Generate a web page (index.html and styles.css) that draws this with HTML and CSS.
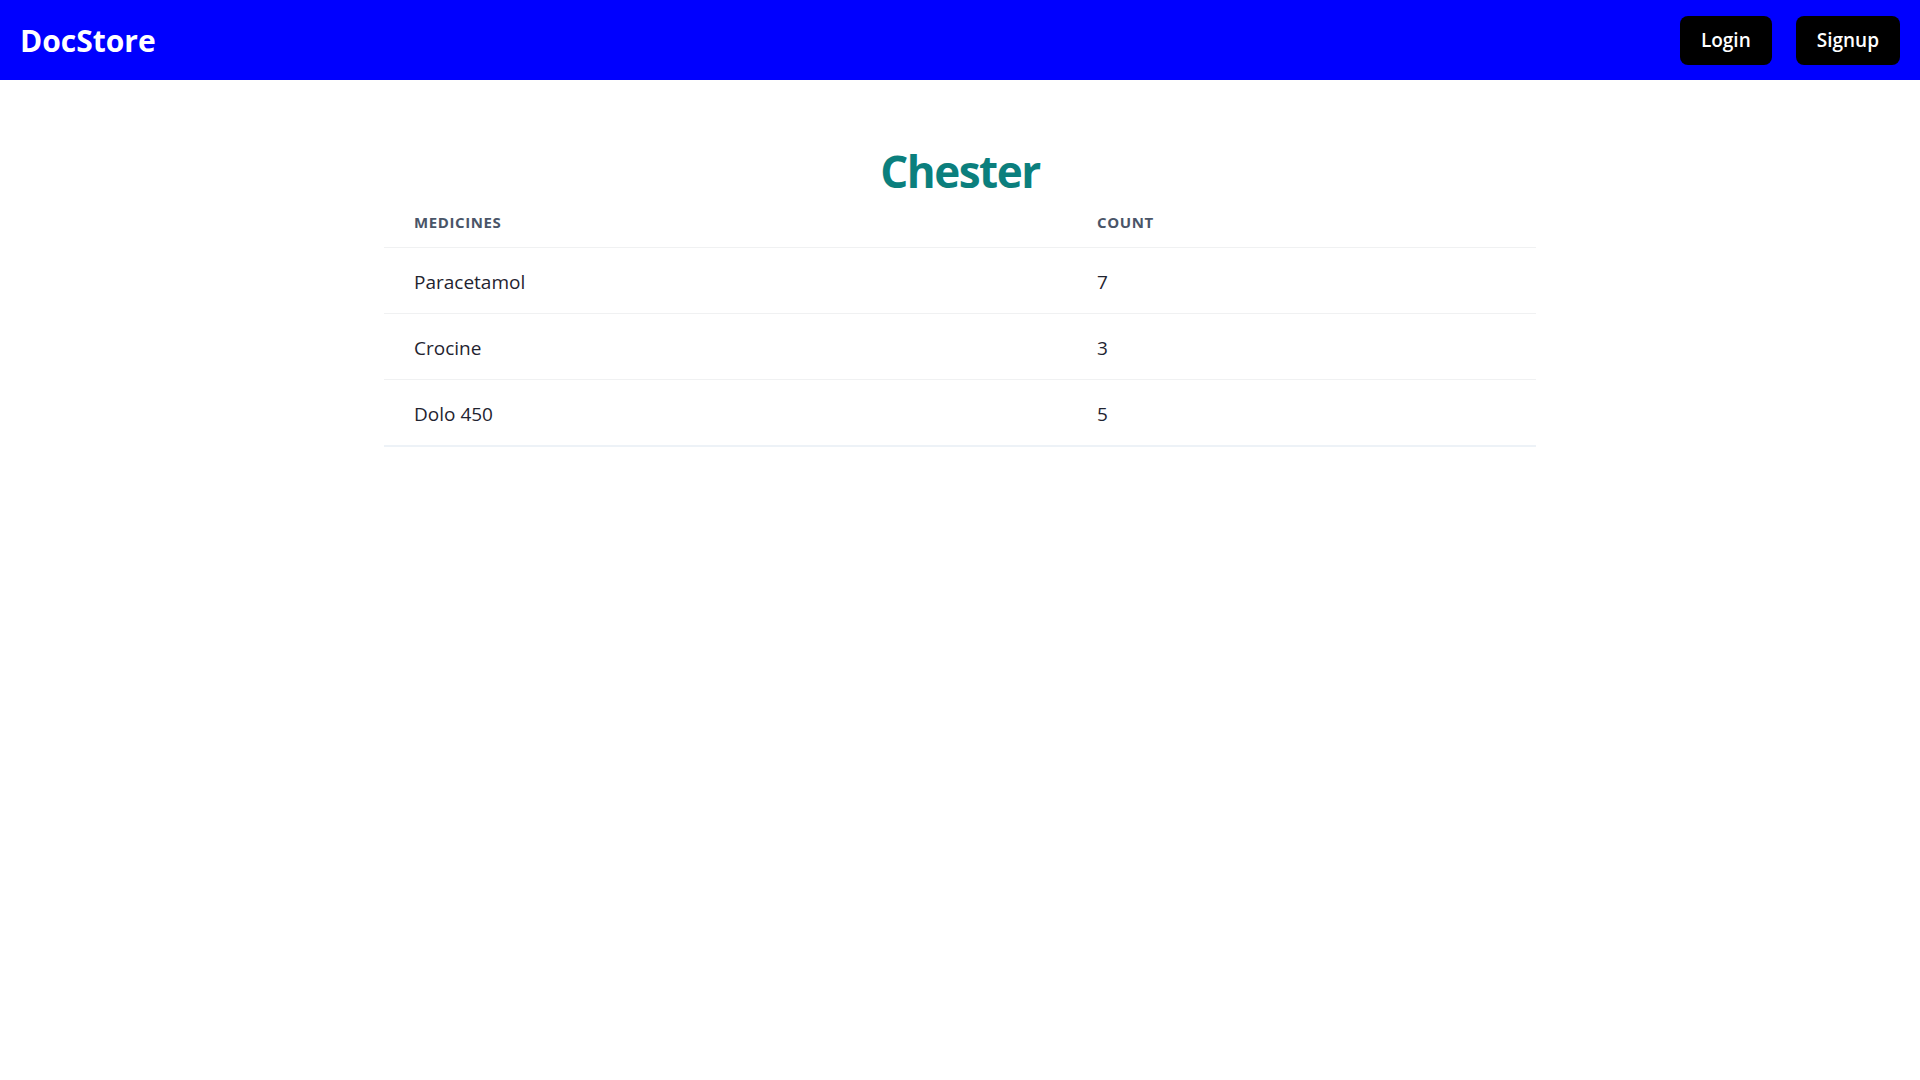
FILE: index.html
```html
<!DOCTYPE html>
<html lang="en">
<head>
<meta charset="utf-8">
<title>DocStore</title>
<link rel="stylesheet" href="styles.css">
</head>
<body>
<nav class="navbar">
  <a class="brand" href="#">DocStore</a>
  <div class="nav-actions">
    <button class="btn">Login</button>
    <button class="btn">Signup</button>
  </div>
</nav>
<main class="content">
  <h1 class="store-title">Chester</h1>
  <table class="stock-table">
    <thead>
      <tr>
        <th class="col-name">Medicines</th>
        <th class="col-count">Count</th>
      </tr>
    </thead>
    <tbody>
      <tr><td>Paracetamol</td><td>7</td></tr>
      <tr><td>Crocine</td><td>3</td></tr>
      <tr><td>Dolo 450</td><td>5</td></tr>
    </tbody>
  </table>
</main>
</body>
</html>
```
FILE: styles.css
```css
html, body {
  margin: 0;
  padding: 0;
  background: #ffffff;
  font-family: "Open Sans", "Noto Sans", sans-serif;
}

.navbar {
  height: 80px;
  box-sizing: border-box;
  background: #0000ff;
  display: flex;
  align-items: center;
  justify-content: space-between;
  padding: 0 20px;
}

.brand {
  color: #ffffff;
  font-size: 30px;
  font-weight: 700;
  text-decoration: none;
  letter-spacing: 0;
}

.nav-actions {
  display: flex;
  gap: 24px;
}

.btn {
  background: #000000;
  color: #ffffff;
  border: none;
  border-radius: 8px;
  font-family: inherit;
  font-size: 19px;
  font-weight: 600;
  line-height: 29px;
  padding: 10px 21px;
  cursor: pointer;
}

.content {
  max-width: 1152px;
  margin: 0 auto;
}

.store-title {
  margin: 68px 0 0;
  text-align: center;
  color: #0b7f7d;
  font-size: 44px;
  line-height: 46px;
  font-weight: 700;
  letter-spacing: -1.5px;
}

.stock-table {
  width: 100%;
  border-collapse: collapse;
}

.stock-table th {
  text-align: left;
  text-transform: uppercase;
  font-size: 15px;
  line-height: 20px;
  font-weight: 700;
  letter-spacing: 0.04em;
  color: #4a5568;
  padding: 18px 30px 15px;
  border-bottom: 1px solid #f0f1f2;
}

.stock-table .col-name {
  width: 623px;
}

.stock-table td {
  font-size: 19px;
  line-height: 28px;
  color: #1f2430;
  padding: 20px 30px 17px;
  border-bottom: 1px solid #f0f1f2;
}

.stock-table tbody tr:last-child td {
  border-bottom: 2px solid #edf2f7;
}
```
